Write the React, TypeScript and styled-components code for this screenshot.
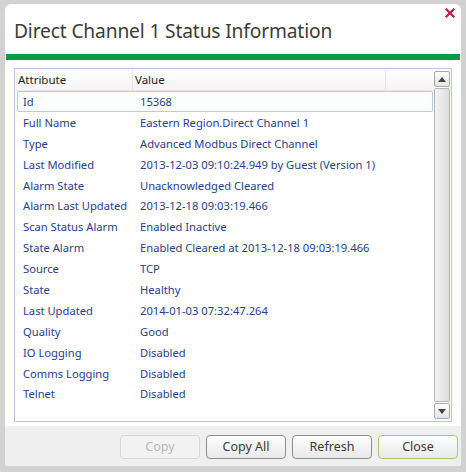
import React from "react";
import styled, { createGlobalStyle } from "styled-components";

const GlobalStyle = createGlobalStyle`
  html, body {
    margin: 0;
    padding: 0;
    background: #d2d2d2;
  }
  * {
    box-sizing: border-box;
  }
`;

const Frame = styled.div`
  width: 466px;
  height: 472px;
  padding: 4px 5px 6px 5px;
  font-family: "Noto Sans", "Open Sans", sans-serif;
`;

const Dialog = styled.div`
  position: relative;
  height: 100%;
  background: #ffffff;
  border-radius: 6px 6px 3px 3px;
  display: flex;
  flex-direction: column;
  overflow: hidden;
`;

const Header = styled.div`
  height: 50px;
  display: flex;
  align-items: flex-end;
  padding: 0 0 10px 9px;
`;

const Title = styled.h1`
  margin: 0;
  font-family: "Noto Sans", "Open Sans", sans-serif;
  font-weight: 400;
  font-size: 19.2px;
  color: #3b3b3b;
  letter-spacing: -0.15px;
`;

const CloseX = styled.button`
  position: absolute;
  top: 1px;
  right: 3px;
  width: 16px;
  height: 16px;
  padding: 0;
  border: none;
  background: none;
  cursor: pointer;
`;

const GreenBar = styled.div`
  height: 6px;
  margin: 0 1px;
  background: #0a9b44;
`;

const Body = styled.div`
  flex: 1;
  padding: 8px 9px 4px 9px;
  display: flex;
`;

const ListBox = styled.div`
  flex: 1;
  border: 1px solid #b3c8e0;
  display: grid;
  grid-template-columns: 1fr 17px;
  padding: 1px 0 1px 1px;
`;

const Table = styled.div`
  display: flex;
  flex-direction: column;
`;

const HeadRow = styled.div`
  height: 21px;
  display: grid;
  grid-template-columns: 117px 253px 1fr;
  background: linear-gradient(#ffffff, #f4f4f4);
  border-bottom: 1px solid #e6e6e6;
`;

const HeadCell = styled.div`
  font-size: 11.5px;
  color: #222;
  padding: 2px 0 0 2px;
  border-right: 1px solid #e2e2e2;
  &:last-child {
    border-right: none;
  }
`;

const Row = styled.div<{ $selected?: boolean }>`
  height: 20.9px;
  margin: 0 1px;
  display: grid;
  grid-template-columns: 117px 1fr;
  align-items: center;
  border: 1px solid ${(p) => (p.$selected ? "#b0cdee" : "transparent")};
  border-radius: 2px;
  background: ${(p) => (p.$selected ? "#fbfdff" : "transparent")};
`;

const Cell = styled.div`
  font-size: 11.2px;
  color: #263d8c;
  padding-left: 5px;
  white-space: nowrap;
`;

const ScrollBar = styled.div`
  display: flex;
  flex-direction: column;
  gap: 1px;
  padding: 1px 1px 1px 0;
`;

const ScrollButton = styled.div`
  height: 16px;
  border: 1px solid #a8a8a8;
  border-radius: 2px;
  background: linear-gradient(#fdfdfd, #e4e4e4);
  display: flex;
  align-items: center;
  justify-content: center;
`;

const Thumb = styled.div`
  flex: 1;
  border: 1px solid #b4b4b4;
  border-radius: 2px;
  background: linear-gradient(90deg, #f2f2f2, #dedede);
`;

const Footer = styled.div`
  height: 40px;
  background: #efefef;
  display: flex;
  justify-content: flex-end;
  align-items: center;
  gap: 6px;
  padding: 1px 3px 0 0;
`;

const Button = styled.button<{ $primary?: boolean }>`
  width: 80px;
  height: 24px;
  font-family: "Noto Sans", "Open Sans", sans-serif;
  font-size: 12.5px;
  color: #3a3a3a;
  border: 1px solid ${(p) => (p.$primary ? "#a2cf62" : "#8e8e8e")};
  border-radius: 4px;
  background: linear-gradient(#fdfdfd, #e9e9e9);
  &:disabled {
    color: #b8b8b8;
    border-color: #d6d6d6;
    background: #f2f2f2;
  }
`;

const rows: [string, string][] = [
  ["Id", "15368"],
  ["Full Name", "Eastern Region.Direct Channel 1"],
  ["Type", "Advanced Modbus Direct Channel"],
  ["Last Modified", "2013-12-03 09:10:24.949 by Guest (Version 1)"],
  ["Alarm State", "Unacknowledged Cleared"],
  ["Alarm Last Updated", "2013-12-18 09:03:19.466"],
  ["Scan Status Alarm", "Enabled Inactive"],
  ["State Alarm", "Enabled Cleared at 2013-12-18 09:03:19.466"],
  ["Source", "TCP"],
  ["State", "Healthy"],
  ["Last Updated", "2014-01-03 07:32:47.264"],
  ["Quality", "Good"],
  ["IO Logging", "Disabled"],
  ["Comms Logging", "Disabled"],
  ["Telnet", "Disabled"],
];

const App = () => {
  return (
    <Frame>
      <GlobalStyle />
      <Dialog>
        <Header>
          <Title>Direct Channel 1 Status Information</Title>
        </Header>
        <CloseX aria-label="Close">
          <svg width="16" height="16" viewBox="0 0 16 16">
            <path
              d="M4.5 4.5 L11.5 11.5 M11.5 4.5 L4.5 11.5"
              stroke="#c8174a"
              strokeWidth="2.2"
              strokeLinecap="square"
            />
          </svg>
        </CloseX>
        <GreenBar />
        <Body>
          <ListBox>
            <Table>
              <HeadRow>
                <HeadCell>Attribute</HeadCell>
                <HeadCell>Value</HeadCell>
                <HeadCell />
              </HeadRow>
              {rows.map(([name, value], i) => (
                <Row key={name} $selected={i === 0}>
                  <Cell>{name}</Cell>
                  <Cell>{value}</Cell>
                </Row>
              ))}
            </Table>
            <ScrollBar>
              <ScrollButton>
                <svg width="8" height="5" viewBox="0 0 8 5">
                  <path d="M0 5 L4 0 L8 5 Z" fill="#444" />
                </svg>
              </ScrollButton>
              <Thumb />
              <ScrollButton>
                <svg width="8" height="5" viewBox="0 0 8 5">
                  <path d="M0 0 L4 5 L8 0 Z" fill="#444" />
                </svg>
              </ScrollButton>
            </ScrollBar>
          </ListBox>
        </Body>
        <Footer>
          <Button disabled>Copy</Button>
          <Button>Copy All</Button>
          <Button>Refresh</Button>
          <Button $primary>Close</Button>
        </Footer>
      </Dialog>
    </Frame>
  );
};

export default App;
